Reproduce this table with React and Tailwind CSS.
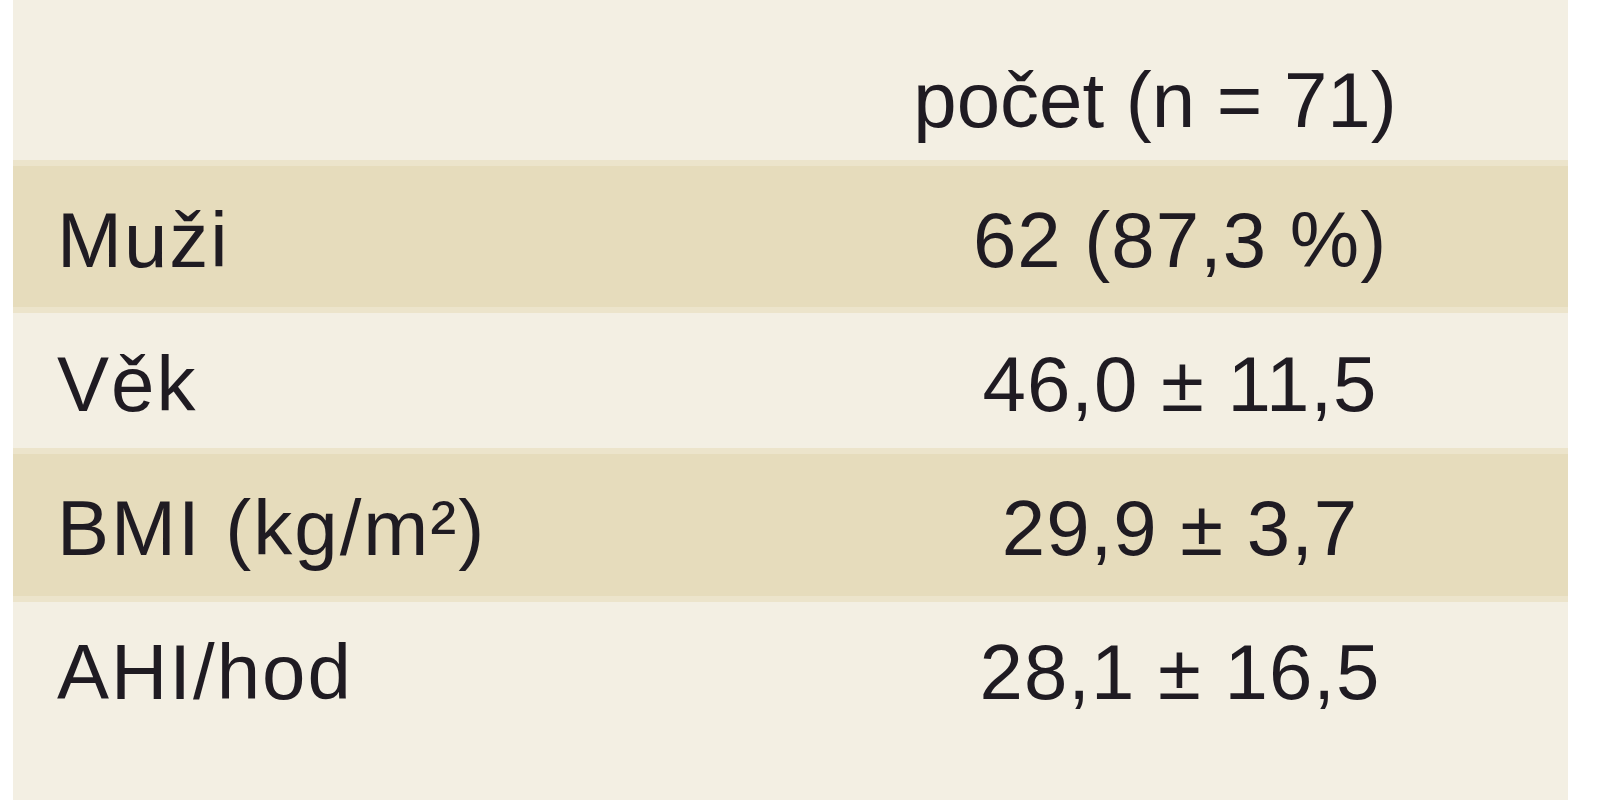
import React from 'react';

// Demographics table (rows alternate light / tan)
const rows = [
  { label: 'Muži', value: '62 (87,3 %)', shaded: true },
  { label: 'Věk', value: '46,0 ± 11,5', shaded: false },
  { label: 'BMI (kg/m²)', value: '29,9 ± 3,7', shaded: true },
  { label: 'AHI/hod', value: '28,1 ± 16,5', shaded: false },
];

const Row = ({ label, value, shaded, height }) => (
  <div
    className={
      shaded
        ? 'flex items-center bg-[#e6dcbc] border-y-[6px] border-[#ece4cb]'
        : 'flex items-center bg-[#f3efe3]'
    }
    style={{ height }}
  >
    <div className="flex-1 pl-[44px] pt-[6px] tracking-[2px]">{label}</div>
    <div className="w-[760px] pr-[16px] pt-[6px] text-center tracking-[1px]">{value}</div>
  </div>
);

export default function App() {
  const heights = [153, 135, 154, 134];
  return (
    <div className="w-[1600px] h-[800px] bg-white flex">
      <div
        className="ml-[13px] w-[1555px] h-full bg-[#f3efe3] text-[#1f1b22] text-[78px] leading-none"
        style={{ fontFamily: '"Liberation Sans", Arial, sans-serif' }}
      >
        <div className="h-[160px] flex pt-[61px]">
          <div className="flex-1" />
          <div className="w-[760px] pr-[66px] text-center">počet (n = 71)</div>
        </div>
        {rows.map((r, i) => (
          <Row key={r.label} {...r} height={heights[i]} />
        ))}
      </div>
    </div>
  );
}
